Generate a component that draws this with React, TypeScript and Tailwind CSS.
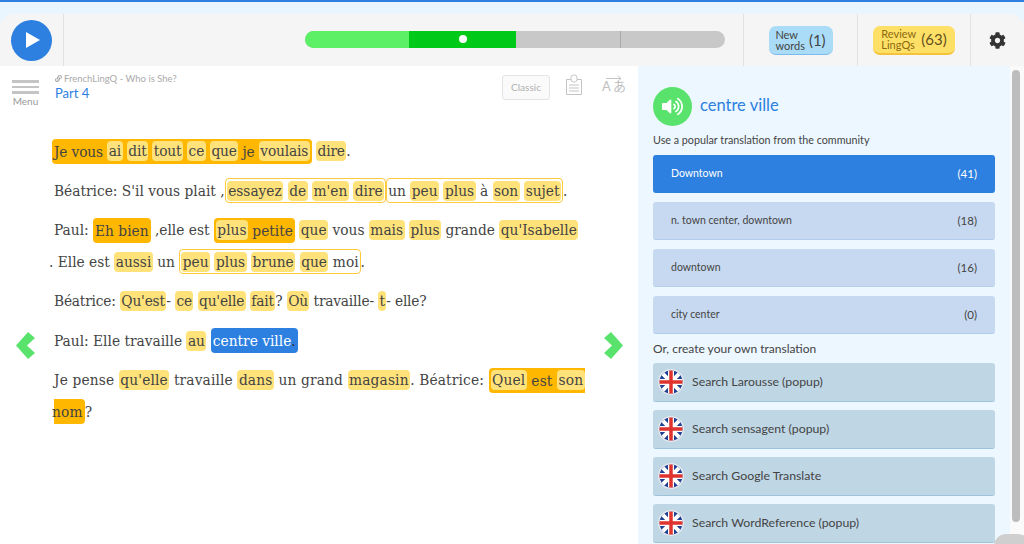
import { FaCog, FaVolumeUp, FaLink } from 'react-icons/fa';

const uiFont = { fontFamily: 'Lato, "Noto Sans CJK JP", sans-serif' };

function W({ children }: { children: React.ReactNode }) {
  return <span className="bg-[#ffe27a] rounded-[4px] px-[1.5px] py-[1px]">{children}</span>;
}

function Orange({ children }: { children: React.ReactNode }) {
  return <span className="bg-[#ffb700] rounded-[4px] px-[2px] py-[3.5px]">{children}</span>;
}

function Outline({ children }: { children: React.ReactNode }) {
  return <span className="border border-[#ffc93c] rounded-[4px] px-[1px] py-[2.5px]">{children}</span>;
}

function Flag() {
  return (
    <svg width="26" height="26" viewBox="0 0 26 26" className="shrink-0">
      <defs>
        <clipPath id="flagClip"><circle cx="13" cy="13" r="11.5" /></clipPath>
      </defs>
      <circle cx="13" cy="13" r="13" fill="#e4e8ec" />
      <g clipPath="url(#flagClip)">
        <rect width="26" height="26" fill="#1f3f94" />
        <path d="M0 0L26 26M26 0L0 26" stroke="#fff" strokeWidth="4" />
        <path d="M13 0V26M0 13H26" stroke="#fff" strokeWidth="6" />
        <path d="M13 0V26M0 13H26" stroke="#e0332e" strokeWidth="3.5" />
      </g>
    </svg>
  );
}

function Arrow({ flip }: { flip?: boolean }) {
  return (
    <svg width="19" height="27" viewBox="0 0 19 27" className={flip ? 'rotate-180' : ''}>
      <path d="M12 0L19 6L11 13.5L19 21L12 27L0 13.5Z" fill="#5ae36c" />
    </svg>
  );
}

const translations = [
  { label: 'n. town center, downtown', count: 18 },
  { label: 'downtown', count: 16 },
  { label: 'city center', count: 0 },
];

const searches = ['Search Larousse (popup)', 'Search sensagent (popup)', 'Search Google Translate', 'Search WordReference (popup)'];

export default function App() {
  return (
    <div className="relative h-[544px] w-[1024px] overflow-hidden bg-[#eaf6ff] border-t-2 border-[#2d80e0] text-[#444]" style={uiFont}>
      <div className="h-[12px]" />

      {/* Top bar */}
      <div className="flex h-[52px] rounded-t-[14px] bg-[#f5f5f5]">
        <div className="flex w-[64px] items-center justify-center border-r border-[#e2e2e2]">
          <div className="flex h-[41px] w-[41px] items-center justify-center rounded-full bg-[#2d80e0]">
            <svg width="14" height="16" viewBox="0 0 14 16" className="ml-[2px]"><path d="M0 0L14 8L0 16Z" fill="#fff" /></svg>
          </div>
        </div>
        <div className="flex w-[680px] items-center justify-end border-r border-[#e2e2e2] pr-[18px]">
          <div className="mb-[2px] flex h-[17px] w-[420px] overflow-hidden rounded-full bg-[#c8c8c8]">
            <div className="w-[104px] bg-[#5cf066]" />
            <div className="flex w-[107px] items-center justify-center bg-[#00c917]">
              <div className="h-[8px] w-[8px] rounded-full bg-white" />
            </div>
            <div className="ml-[104px] w-px bg-[#a8a8a8]" />
          </div>
        </div>
        <div className="flex w-[114px] items-center justify-center border-r border-[#e2e2e2]">
          <div className="flex h-[29px] w-[64px] items-center justify-center gap-[4px] rounded-[7px] border-b border-[#7bbcec] bg-[#aadcf7]">
            <span className="text-[11px] leading-[11px] text-[#444]">New<br />words</span>
            <span className="text-[15px] leading-[18px] text-[#444]">(1)</span>
          </div>
        </div>
        <div className="flex w-[113px] items-center justify-center border-r border-[#e2e2e2]">
          <div className="flex h-[29px] w-[82px] items-center justify-center gap-[5px] rounded-[7px] border-b-2 border-[#f5c23c] bg-[#ffe066]">
            <span className="text-[11px] leading-[11px] text-[#8a6a10]">Review<br />LingQs</span>
            <span className="text-[15px] leading-[18px] text-[#5f5020]">(63)</span>
          </div>
        </div>
        <div className="flex flex-1 items-center justify-center pr-[1px]">
          <FaCog className="h-[17px] w-[17px] text-[#333]" />
        </div>
      </div>

      <div className="flex h-[478px]">
        {/* Reader */}
        <div className="relative w-[638px] bg-white">
          <div className="flex h-[51px]">
            <div className="flex w-[51px] flex-col items-center pt-[14px]">
              <div className="flex w-[27px] flex-col gap-[3px]">
                <div className="h-[2.5px] bg-[#c4c4c4]" />
                <div className="h-[2.5px] bg-[#c4c4c4]" />
                <div className="h-[2.5px] bg-[#c4c4c4]" />
              </div>
              <span className="text-[10px] leading-[15px] text-[#999]">Menu</span>
            </div>
            <div className="w-[451px] pl-[4px] pt-[6px]">
              <div className="flex items-center gap-[2px] text-[9.5px] leading-[13px] text-[#aaa]">
                <FaLink className="h-[7px] w-[7px]" />
                <span>FrenchLingQ - Who is She?</span>
              </div>
              <div className="text-[13px] leading-[16px] text-[#2d80e0]">Part 4</div>
            </div>
            <div className="flex items-start pt-[9px]">
              <div className="flex h-[25px] w-[48px] items-center justify-center rounded-[3px] border border-[#e4e4e4] bg-[#fafafa] text-[10px] text-[#b0b0b0]">Classic</div>
              <svg width="18" height="22" viewBox="0 0 18 22" fill="none" stroke="#c4c4c4" className="ml-[15px] -mt-px">
                <path d="M1.5 5.5H6M12 5.5H16.5V20.5H1.5V5.5" />
                <rect x="6" y="1" width="6" height="7" rx="2.5" />
                <path d="M4 11H14M4 14H14M4 17H14" />
              </svg>
              <div className="ml-[19px] flex w-[24px] flex-col items-center text-[#c0c0c0]">
                <svg width="16" height="7" viewBox="0 0 16 7" fill="none" stroke="#c4c4c4"><path d="M0 3.5H15M11.5 0.5L15 3.5L11.5 6.5" /></svg>
                <div className="-mt-[3px] flex w-full justify-between text-[13px] leading-[15px]">
                  <span>A</span>
                  <span>あ</span>
                </div>
              </div>
            </div>
          </div>

          <div className="whitespace-nowrap pl-[54px] pt-[19px] text-[15.3px] leading-[31.5px] text-[#444]" style={{ fontFamily: '"DejaVu Serif Condensed", "DejaVu Serif", serif' }}>
            <p className="mb-[8px] -ml-[2px] tracking-[-0.15px]">
              <Orange>Je vous <W>ai</W> <W>dit</W> <W>tout</W> <W>ce</W> <W>que</W> je <W>voulais</W></Orange> <W>dire</W>.
            </p>
            <p className="mb-[8px]">
              Béatrice: S'il vous plait ,<Outline><W>essayez</W> <W>de</W> <W>m'en</W> <W>dire</W></Outline><Outline>un <W>peu</W> <W>plus</W> à <W>son</W> <W>sujet</W></Outline>.
            </p>
            <p className="mb-[8px]">
              Paul: <Orange>Eh bien</Orange> ,elle est <Orange><W>plus</W> petite</Orange> <W>que</W> vous <W>mais</W> <W>plus</W> grande <W>qu'Isabelle</W>
              <br />
              <span className="-ml-[5px]">. Elle est</span> <W>aussi</W> un <Outline><W>peu</W> <W>plus</W> <W>brune</W> <W>que</W> moi</Outline>.
            </p>
            <p className="mb-[8px] tracking-[-0.2px]">
              Béatrice: <W>Qu'est</W>- <W>ce</W> <W>qu'elle</W> <W>fait</W>? <W>Où</W> travaille- <W>t</W>- elle?
            </p>
            <p className="mb-[8px]">
              Paul: Elle travaille <W>au</W> <span className="rounded-[4px] bg-[#2d80e0] px-[2px] py-[3.5px] text-white">centre ville<span className="text-[#333]">.</span></span>
            </p>
            <p className="tracking-[0.15px]">
              Je pense <W>qu'elle</W> travaille <W>dans</W> un grand <W>magasin</W>. Béatrice: <Orange><W>Quel</W> est <W>son</W><br /><span className="-ml-[2px]">nom</span></Orange>?
            </p>
          </div>

          <div className="absolute left-[16px] top-[266px]"><Arrow /></div>
          <div className="absolute left-[604px] top-[266px]"><Arrow flip /></div>
        </div>

        {/* Word panel */}
        <div className="w-[372px] bg-[#ecf7ff] pl-[15px] pr-[15px] pt-[21px]">
          <div className="flex items-center gap-[8px]">
            <div className="flex h-[39px] w-[39px] items-center justify-center rounded-full bg-[#5ae36c]">
              <FaVolumeUp className="h-[21px] w-[21px] text-white" />
            </div>
            <span className="-mt-[2px] text-[16.5px] text-[#2d80e0]">centre ville</span>
          </div>
          <div className="mt-[6px] text-[10.75px] leading-[16px] text-[#444]">Use a popular translation from the community</div>
          <div className="mt-[7px] flex flex-col gap-[9px]">
            <div className="flex h-[38px] items-center justify-between rounded-[3px] bg-[#2d80e0] px-[18px] text-[10.5px] text-white">
              <span>Downtown</span><span className="text-[11.5px]">(41)</span>
            </div>
            {translations.map((t) => (
              <div key={t.label} className="flex h-[38px] items-center justify-between rounded-[3px] border-b border-[#b3cdea] bg-[#c7d9f0] px-[18px] text-[10.5px] text-[#444]">
                <span>{t.label}</span><span className="text-[11.5px]">({t.count})</span>
              </div>
            ))}
          </div>
          <div className="mt-[7px] text-[12px] leading-[16px] text-[#444]">Or, create your own translation</div>
          <div className="mt-[6px] flex flex-col gap-[8.5px]">
            {searches.map((s) => (
              <div key={s} className="flex h-[38.5px] items-center gap-[8px] rounded-[3px] border-b border-[#9fc2dc] bg-[#bfd6e4] pl-[5px] text-[12.3px] text-[#444]">
                <Flag />
                <span>{s}</span>
              </div>
            ))}
          </div>
        </div>

        {/* Scrollbar */}
        <div className="flex-1 bg-[#fafafa] pl-[2px] pr-[4px] pt-[4px]">
          <div className="h-[452px] rounded-full bg-[#bdbdbd]" />
        </div>
      </div>

      <div className="absolute bottom-[-14px] right-[-6px] h-[24px] w-[36px] rounded-full bg-[#cfcfcf]" />
    </div>
  );
}
